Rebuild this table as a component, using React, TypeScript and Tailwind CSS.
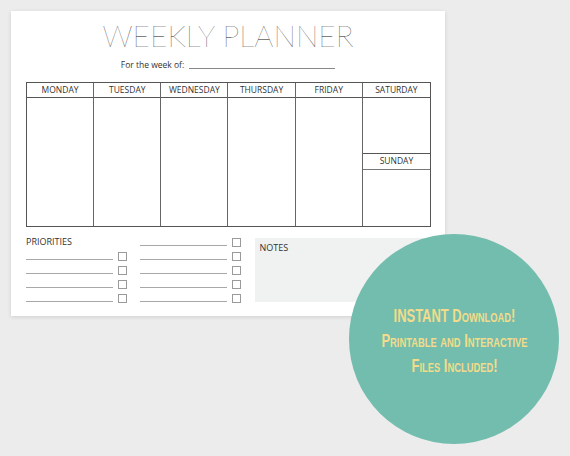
import React from "react";

const days = ["MONDAY", "TUESDAY", "WEDNESDAY", "THURSDAY", "FRIDAY"];

const PriorityRow = () => (
  <div className="flex h-[14px] items-end gap-[5px]">
    <div className="h-px w-[87px] bg-[#a8a8a8] mb-px" />
    <div className="h-[9px] w-[9px] border border-[#9a9a9a] bg-white" />
  </div>
);

const App = () => {
  return (
    <div
      className="relative h-[456px] w-[570px] overflow-hidden bg-[#ececec] pt-[11px] pl-[11px]"
      style={{ fontFamily: "'Open Sans', 'Liberation Sans', sans-serif" }}
    >
      {/* paper sheet */}
      <div className="h-[305px] w-[434px] bg-white px-[15px] pt-[9px] shadow-[0_1px_4px_rgba(0,0,0,0.12)]">
        <h1
          className="text-center text-[30px] leading-[30px] font-thin text-[#111]"
          style={{ fontFamily: "Lato, 'DejaVu Sans', sans-serif" }}
        >
          WEEKLY PLANNER
        </h1>

        <div className="mt-[10px] flex items-end justify-center gap-[5px]">
          <span className="text-[8.5px] leading-[10px] text-[#333]">For the week of:</span>
          <div className="mb-[1px] h-px w-[146px] bg-[#888]" />
        </div>

        {/* week grid */}
        <div className="mt-[12px] grid w-[405px] grid-cols-6 border border-[#555]">
          {days.map((d) => (
            <div key={d} className="flex h-[143px] flex-col border-r border-[#666]">
              <div className="flex h-[15px] items-center justify-center border-b border-[#555] text-[8.5px] text-[#333]">
                {d}
              </div>
              <div className="flex-1" />
            </div>
          ))}
          <div className="flex h-[143px] flex-col">
            <div className="flex h-[15px] items-center justify-center border-b border-[#555] text-[8.5px] text-[#333]">
              SATURDAY
            </div>
            <div className="h-[56px] border-b border-[#555]" />
            <div className="flex h-[16px] items-center justify-center border-b border-[#777] text-[8.5px] text-[#333]">
              SUNDAY
            </div>
            <div className="flex-1" />
          </div>
        </div>

        {/* priorities + notes */}
        <div className="mt-[6px] flex">
          <div className="w-[114px]">
            <div className="flex h-[14px] items-end text-[9px] leading-[10px] text-[#333]">PRIORITIES</div>
            <PriorityRow />
            <PriorityRow />
            <PriorityRow />
            <PriorityRow />
          </div>
          <div className="w-[116px]">
            <PriorityRow />
            <PriorityRow />
            <PriorityRow />
            <PriorityRow />
            <PriorityRow />
          </div>
          <div className="mt-[5px] h-[64px] w-[175px] bg-[#f0f1f1] px-[4px] pt-[3px] text-[9px] text-[#333]">
            NOTES
          </div>
        </div>
      </div>

      {/* badge */}
      <div className="absolute top-[234px] left-[349px] flex h-[210px] w-[210px] flex-col items-center justify-center rounded-full bg-[#72bdad] pt-[5px]">
        <div
          className="scale-x-[0.72] text-center text-[18px] leading-[25px] font-bold whitespace-nowrap text-[#f2db8b]"
          style={{ fontFamily: "'Liberation Sans', sans-serif", fontVariant: "small-caps" }}
        >
          <div>INSTANT Download!</div>
          <div>Printable and Interactive</div>
          <div>Files Included!</div>
        </div>
      </div>
    </div>
  );
};

export default App;
